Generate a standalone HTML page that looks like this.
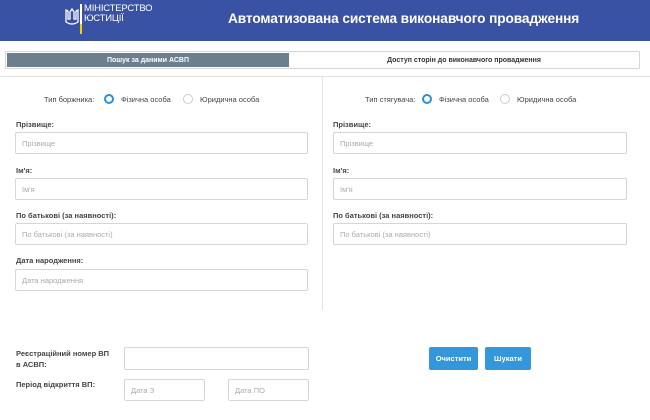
<!DOCTYPE html>
<html><head><meta charset="utf-8"><style>
*{box-sizing:border-box;margin:0;padding:0}
body{width:650px;height:420px;background:#fff;font-family:"Liberation Sans",sans-serif;position:relative;overflow:hidden;color:#333}
.a{position:absolute}
.hdr{left:0;top:0;width:650px;height:41px;background:#3a52a3}
.lbl{font-size:7.5px;font-weight:bold;color:#444}
.in{border:1px solid #d6d6d6;border-radius:2px;background:#fff;font-size:7.5px;color:#aaa;padding-left:6px;display:flex;align-items:center}
.rad{width:10px;height:10px;border-radius:50%;border:1px solid #ccc}
.rad.on{border:2.5px solid #2d8ed6}
.rt{font-size:7.5px;color:#444}
.btn{background:#3497db;color:#fff;font-size:7.5px;font-weight:bold;display:flex;align-items:center;justify-content:center;border-radius:2px}
</style></head><body>
<div class="a hdr"></div>
<svg class="a" style="left:65px;top:8px" width="14" height="20" viewBox="0 0 14 20"><path d="M1 2v12q6 4 12 0V2l-2 1v8h-2V4L7 1 5 4v7H3V3z" fill="none" stroke="#fff" stroke-width="1.3"/></svg>
<div class="a" style="left:80px;top:4px;width:2px;height:30px;background:#fff"></div>
<div class="a" style="left:80px;top:24px;width:2px;height:10px;background:#f5d000"></div>
<div class="a" style="left:84px;top:4px;color:#fff;font-size:9.5px;line-height:10px;letter-spacing:-0.2px">МІНІСТЕРСТВО<br>ЮСТИЦІЇ</div>
<div class="a" style="left:228px;top:11px;color:#fff;font-size:13.7px;font-weight:bold;letter-spacing:-0.1px">Автоматизована система виконавчого провадження</div>
<div class="a" style="left:5px;top:51px;width:635px;height:18px;border:1px solid #d6d6d6;border-radius:2px"></div>
<div class="a" style="left:7px;top:53px;width:282px;height:14px;background:#6b7f8f;color:#fff;font-size:7px;font-weight:bold;display:flex;align-items:center;justify-content:center">Пошук за даними АСВП</div>
<div class="a" style="left:289px;top:53px;width:350px;height:14px;color:#333;font-size:7px;font-weight:bold;display:flex;align-items:center;justify-content:center">Доступ сторін до виконавчого провадження</div>
<div class="a" style="left:0;top:76px;width:650px;height:1px;background:#e2e2e2"></div>
<div class="a" style="left:322px;top:77px;width:1px;height:233px;background:#e2e2e2"></div>

<div class="a rt" style="left:44px;top:95px">Тип боржника:</div>
<div class="a rad on" style="left:104px;top:94px"></div>
<div class="a rt" style="left:121px;top:95px">Фізична особа</div>
<div class="a rad" style="left:183px;top:94px"></div>
<div class="a rt" style="left:200px;top:95px">Юридична особа</div>

<div class="a rt" style="left:365px;top:95px">Тип стягувача:</div>
<div class="a rad on" style="left:422px;top:94px"></div>
<div class="a rt" style="left:439px;top:95px">Фізична особа</div>
<div class="a rad" style="left:500px;top:94px"></div>
<div class="a rt" style="left:517px;top:95px">Юридична особа</div>

<div class="a lbl" style="left:16px;top:120px">Прізвище:</div>
<div class="a in" style="left:15px;top:132px;width:293px;height:22px">Прізвище</div>
<div class="a lbl" style="left:16px;top:166px">Ім'я:</div>
<div class="a in" style="left:15px;top:178px;width:293px;height:22px">Ім'я</div>
<div class="a lbl" style="left:16px;top:211px">По батькові (за наявності):</div>
<div class="a in" style="left:15px;top:223px;width:293px;height:22px">По батькові (за наявності)</div>
<div class="a lbl" style="left:16px;top:256px">Дата народження:</div>
<div class="a in" style="left:15px;top:269px;width:293px;height:22px">Дата народження</div>

<div class="a lbl" style="left:333px;top:120px">Прізвище:</div>
<div class="a in" style="left:333px;top:132px;width:294px;height:22px">Прізвище</div>
<div class="a lbl" style="left:333px;top:166px">Ім'я:</div>
<div class="a in" style="left:333px;top:178px;width:294px;height:22px">Ім'я</div>
<div class="a lbl" style="left:333px;top:211px">По батькові (за наявності):</div>
<div class="a in" style="left:333px;top:223px;width:294px;height:22px">По батькові (за наявності)</div>

<div class="a lbl" style="left:16px;top:348px;line-height:11px">Реєстраційний номер ВП<br>в АСВП:</div>
<div class="a in" style="left:124px;top:347px;width:185px;height:23px"></div>
<div class="a lbl" style="left:16px;top:380px">Період відкриття ВП:</div>
<div class="a in" style="left:124px;top:379px;width:81px;height:22px">Дата З</div>
<div class="a in" style="left:228px;top:379px;width:81px;height:22px">Дата ПО</div>
<div class="a btn" style="left:429px;top:347px;width:49px;height:23px">Очистити</div>
<div class="a btn" style="left:485px;top:347px;width:46px;height:23px">Шукати</div>
</body></html>
